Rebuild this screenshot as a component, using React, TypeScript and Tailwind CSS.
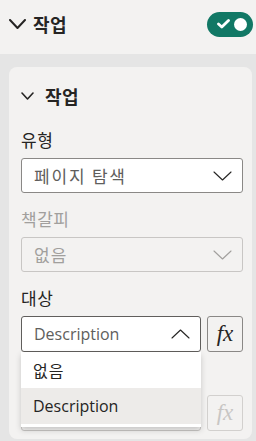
import React from "react";

const FONT = { fontFamily: '"Open Sans", "Noto Sans CJK KR", sans-serif' };
const KR = { fontFamily: '"Noto Sans CJK KR", sans-serif' };

function Chevron({ w, h, sw, up = false, color = "#252423" }: { w: number; h: number; sw: number; up?: boolean; color?: string }) {
  return (
    <svg width={w} height={h} viewBox={`0 0 ${w} ${h}`} fill="none">
      <path
        d={up ? `M1 ${h - 1} L${w / 2} 1 L${w - 1} ${h - 1}` : `M1 1 L${w / 2} ${h - 1} L${w - 1} 1`}
        stroke={color}
        strokeWidth={sw}
        strokeLinecap="round"
        strokeLinejoin="round"
      />
    </svg>
  );
}

function Fx({ disabled = false }: { disabled?: boolean }) {
  return (
    <div
      className={`w-[36px] h-[36px] shrink-0 rounded-[3px] border flex items-center justify-center ${
        disabled ? "border-[#d2d0ce] text-[#c8c6c4]" : "border-[#8a8886] text-[#252423]"
      }`}
    >
      <span className="italic text-[23px] leading-none pb-[2px]" style={{ fontFamily: '"Liberation Serif", serif' }}>
        fx
      </span>
    </div>
  );
}

export default function App() {
  return (
    <div className="w-[256px] h-[441px] bg-[#e5e5e5] overflow-hidden" style={FONT}>
      <div className="h-[54px] bg-[#f3f2f1] flex items-center pb-[6px] pl-[9px] pr-[3px]">
        <Chevron w={17} h={10} sw={2} />
        <span className="ml-[7px] text-[18px] font-bold text-[#252423] leading-none tracking-[0.5px]" style={KR}>
          작업
        </span>
        <div className="ml-auto w-[46px] h-[25px] rounded-full bg-[#117865] flex items-center pl-[10px] pr-[6px]">
          <svg width="13" height="10" viewBox="0 0 13 10" fill="none">
            <path d="M1.5 5 L4.8 8 L11.5 1.5" stroke="white" strokeWidth="2.8" strokeLinecap="round" strokeLinejoin="round" />
          </svg>
          <div className="ml-auto w-[13px] h-[13px] rounded-full bg-white" />
        </div>
      </div>

      <div className="mt-[13px] ml-[9px] mr-[4px] h-[372px] bg-[#f3f2f1] rounded-[8px] pl-[12px] pr-[9px] pt-[17px]">
        <div className="h-[24px] flex items-center">
          <Chevron w={13} h={8} sw={1.6} />
          <span className="ml-[11px] text-[18px] font-bold text-[#252423] leading-none tracking-[0.5px]" style={KR}>
            작업
          </span>
        </div>

        <div className="mt-[20px]">
          <div className="h-[24px] leading-[24px] text-[17px] tracking-[0.5px] text-[#252423]" style={KR}>유형</div>
          <div className="mt-[6px] h-[35px] rounded-[3px] border border-[#8a8886] bg-white flex items-center pl-[12px] pr-[10px]">
            <span className="text-[17px] tracking-[1.8px] text-[#605e5c]" style={KR}>페이지 탐색</span>
            <span className="ml-auto">
              <Chevron w={19} h={10} sw={1.1} />
            </span>
          </div>
        </div>

        <div className="mt-[14px]">
          <div className="h-[24px] leading-[24px] text-[17px] tracking-[0.5px] text-[#a19f9d]" style={KR}>책갈피</div>
          <div className="mt-[6px] h-[35px] rounded-[3px] border border-[#c8c6c4] bg-[#f3f2f1] flex items-center pl-[12px] pr-[10px]">
            <span className="text-[17px] tracking-[1px] text-[#a19f9d]" style={KR}>없음</span>
            <span className="ml-auto">
              <Chevron w={19} h={10} sw={1.1} color="#a19f9d" />
            </span>
          </div>
        </div>

        <div className="mt-[14px]">
          <div className="h-[24px] leading-[24px] text-[17px] tracking-[0.5px] text-[#252423]" style={KR}>대상</div>
          <div className="mt-[6px] flex gap-[6px]">
            <div className="relative flex-1">
              <div className="h-[36px] rounded-[3px] border border-[#605e5c] bg-white flex items-center pl-[12px] pr-[10px]">
                <span className="text-[16px] text-[#605e5c]">Description</span>
                <span className="ml-auto">
                  <Chevron w={19} h={10} sw={1.1} up />
                </span>
              </div>
              <div className="absolute left-0 right-0 top-full bg-white shadow-[0_3px_6px_rgba(0,0,0,0.18)] z-10 pb-[3px]">
                <div className="h-[36px] flex items-center pl-[12px] text-[16px] tracking-[1px] text-[#252423]" style={KR}>없음</div>
                <div className="h-[36px] flex items-center pl-[12px] text-[16px] text-[#252423] bg-[#edebe9]">Description</div>
              </div>
            </div>
            <Fx />
          </div>
        </div>

        <div className="mt-[13px]">
          <div className="h-[24px] leading-[24px] text-[16px] text-[#a19f9d]">&nbsp;</div>
          <div className="mt-[6px] flex gap-[6px]">
            <div className="flex-1 h-[36px] rounded-[3px] border border-[#c8c6c4]" />
            <Fx disabled />
          </div>
        </div>
      </div>
    </div>
  );
}
